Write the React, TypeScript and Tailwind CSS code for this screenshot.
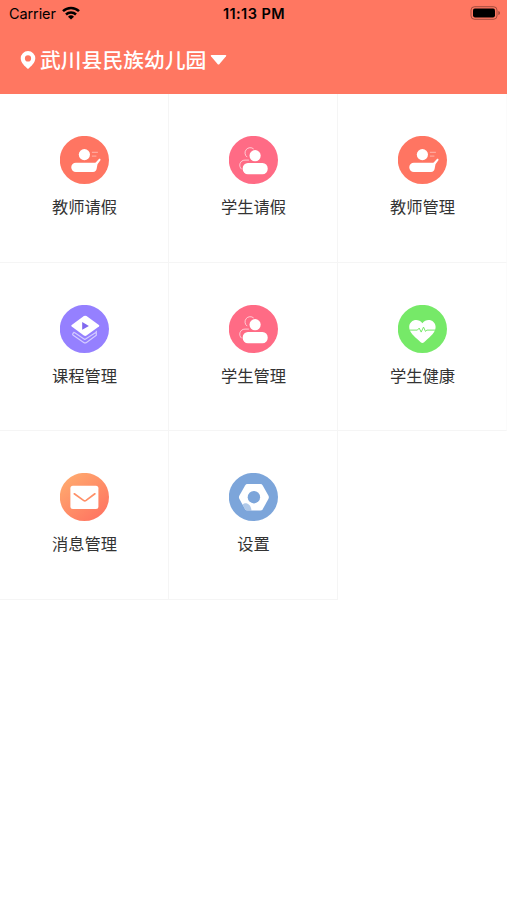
import type { ReactNode } from "react";

interface IMenuItem {
  label: string;
  icon: ReactNode;
}

const MENU_ITEMS: IMenuItem[] = [
  { label: "教师请假", icon: <TeacherIcon /> },
  { label: "学生请假", icon: <StudentIcon /> },
  { label: "教师管理", icon: <TeacherIcon /> },
  { label: "课程管理", icon: <CourseIcon /> },
  { label: "学生管理", icon: <StudentIcon /> },
  { label: "学生健康", icon: <HealthIcon /> },
  { label: "消息管理", icon: <MessageIcon /> },
  { label: "设置", icon: <SettingsIcon /> },
];

export default function App() {
  return (
    <div className="min-h-[900px] w-full bg-white font-['Inter','Noto_Sans_CJK_SC',sans-serif]">
      <header className="h-[94px] bg-[#ff7761]">
        <StatusBar />
        <SchoolPicker name="武川县民族幼儿园" />
      </header>
      <main className="grid grid-cols-3">
        {MENU_ITEMS.map((item) => (
          <MenuCell key={item.label} {...item} />
        ))}
      </main>
    </div>
  );
}

function StatusBar() {
  return (
    <div className="grid h-7 grid-cols-3 items-center pr-[6px] pl-[7px] text-black">
      <div className="flex items-center gap-[6px] pl-[2px]">
        <span className="text-[14.5px] leading-none tracking-[-0.1px]">Carrier</span>
        <svg className="-mt-[2px]" width="18" height="14" viewBox="0 0 18 14" fill="none" stroke="#000" strokeWidth="2.5">
          <path d="M1 5.2a11.5 11.5 0 0 1 16 0" />
          <path d="M4 8.5a7.2 7.2 0 0 1 10 0" />
          <path d="M9 13.6 6 10.7a4.4 4.4 0 0 1 6 0Z" fill="#000" stroke="none" />
        </svg>
      </div>
      <span className="text-center text-[14.5px] leading-none font-semibold tracking-[0.45px]">11:13 PM</span>
      <svg className="-mt-[2px] justify-self-end" width="31" height="14" viewBox="0 0 31 14">
        <rect x="1" y=".7" width="26" height="12.6" rx="3.5" fill="none" stroke="#7d3a30" strokeOpacity=".7" />
        <rect x="3" y="2.6" width="22" height="8.8" rx="1.8" fill="#000" />
        <path d="M28.4 5v4c1-.3 1.5-1.1 1.5-2s-.5-1.7-1.5-2Z" fill="#7d3a30" fillOpacity=".8" />
      </svg>
    </div>
  );
}

function SchoolPicker({ name }: { name: string }) {
  return (
    <div className="flex h-[63px] items-center pl-[20px] text-white">
      <svg width="16" height="18" viewBox="0 0 16 18">
        <path
          d="M8 0A7.3 7.3 0 0 0 .7 7.3C.7 11.7 5 15.5 8 18c3-2.5 7.3-6.3 7.3-10.7A7.3 7.3 0 0 0 8 0Zm0 4.3a3.1 3.1 0 1 1 0 6.2 3.1 3.1 0 0 1 0-6.2Z"
          fill="#fff"
          fillRule="evenodd"
        />
      </svg>
      <span className="ml-1 pt-[3px] text-[20.8px] leading-none font-medium">{name}</span>
      <svg className="ml-1" width="17" height="10" viewBox="0 0 17 10">
        <path d="M1.5 0h14q1.4 0 .5 1.2L9.500 9q-1 1.2-2 0L1 1.2Q.1 0 1.500 0Z" fill="#fff" />
      </svg>
    </div>
  );
}

function MenuCell({ label, icon }: IMenuItem) {
  return (
    <div className="flex h-[168.6px] flex-col items-center border-r border-b border-[#f5f5f5] pt-[42px] pl-px nth-[3n]:border-r-[#fbfbfb]">
      {icon}
      <span className="mt-[13px] text-[16.3px] leading-[18px] text-[#333]">{label}</span>
    </div>
  );
}

// Round badge shared by all menu icons.
function Badge({ fill, children }: { fill: string; children: ReactNode }) {
  return (
    <svg width="50" height="49" viewBox="0.6 0.2 50 49" fill="none">
      <ellipse cx="25" cy="24.2" rx="24.6" ry="24.1" fill={fill} />
      {children}
    </svg>
  );
}

function TeacherIcon() {
  return (
    <Badge fill="#ff7562">
      <circle cx="25" cy="18.8" r="5.6" fill="#fff" />
      <path
        d="M16.5 26.900h18.600c.9 0 1.400-.3 1.900-1l2.300-2.500c.9-1 2.300-.1 1.700 1.100l-2.900 3.900-.8 4.400c-.4 2.200-1.500 3.400-3.700 3.400H16.500a4.650 4.650 0 0 1 0-9.300Z"
        fill="#fff"
      />
      <path d="M32.500 16.500h6M32.500 20.300h4.500" stroke="#fff" strokeOpacity=".5" strokeWidth=".9" />
    </Badge>
  );
}

function StudentIcon() {
  return (
    <Badge fill="#ff6b85">
      <path d="M18.800 21.300a5.200 5.200 0 1 1 6.500-8.100" stroke="#fff" strokeOpacity=".65" />
      <path d="M13.300 33.500c-3.800-3.300-1.700-9.200 3.300-9.200h3.900" stroke="#fff" strokeOpacity=".65" />
      <circle cx="26.700" cy="19.900" r="5.600" fill="#fff" />
      <rect x="14.300" y="27.300" width="25" height="11.200" rx="5.200" fill="#fff" />
    </Badge>
  );
}

function CourseIcon() {
  return (
    <Badge fill="#9580ff">
      <path
        d="m15 27.200-1.500 1.500q-.7.900.3 1.700l10.500 7.200q1.400 1 2.800 0l9.800-7.100V26M15 27.800l10.400 6.800 11-7"
        stroke="#fff"
        strokeOpacity=".6"
        strokeWidth="1.2"
        strokeLinejoin="round"
      />
      <path
        d="M24.500 11.300q1.300-.9 2.600 0l12.400 8.800q1 .8 0 1.600l-12.400 9q-1.300.9-2.600 0l-12.200-9q-1-.8 0-1.600Z"
        fill="#fff"
      />
      <path d="m22.800 17.300 6.700 3.800-6.700 3.800Z" fill="#8068ef" />
    </Badge>
  );
}

function HealthIcon() {
  return (
    <Badge fill="#76e968">
      <path
        d="M25 38.200c-1.200 0-2.200-1.200-3.300-2.200-5-4.600-9.900-8.300-9.900-13.700 0-7.200 9-9.700 13.200-3.800 4.200-5.900 13.200-3.400 13.200 3.800 0 5.400-4.900 9.100-9.900 13.700-1.100 1-2.100 2.200-3.300 2.200Z"
        fill="#fff"
      />
      <path
        d="M12 25.300h8l1.800-2 2 4 2.300-5 2 4.300 1.400-1.300H38"
        stroke="#76e968"
        strokeLinejoin="round"
      />
    </Badge>
  );
}

function MessageIcon() {
  return (
    <Badge fill="url(#message-bg)">
      <defs>
        <linearGradient id="message-bg" x1=".15" y1=".1" x2=".8" y2=".9">
          <stop stopColor="#ffa86e" />
          <stop offset="1" stopColor="#ff7762" />
        </linearGradient>
      </defs>
      <rect x="11" y="13" width="28" height="23.3" rx="2.5" fill="#fff" />
      <path
        d="m14.900 21 9.200 6.600q1.300.9 2.600 0l8.800-6.600"
        stroke="#ff9068"
        strokeWidth="1.7"
        strokeLinecap="round"
      />
    </Badge>
  );
}

function SettingsIcon() {
  return (
    <Badge fill="#7ca5da">
      <path
        d="M19 11.300h13q1.500 0 2.300 1.300l5.800 10.400q.7 1.500 0 3l-5.800 10.400q-.8 1.300-2.300 1.300H19q-1.500 0-2.300-1.300L10.900 26q-.7-1.500 0-3l5.800-10.400q.8-1.300 2.300-1.300Z"
        fill="#fff"
      />
      <circle cx="25.500" cy="24.400" r="6.200" fill="#7ca5da" />
      <path d="M14.300 32c2.500-3.200 8.200-1.200 8.800 5.700H19q-1.500 0-2.300-1.300Z" fill="#7ca5da" fillOpacity=".6" />
    </Badge>
  );
}
